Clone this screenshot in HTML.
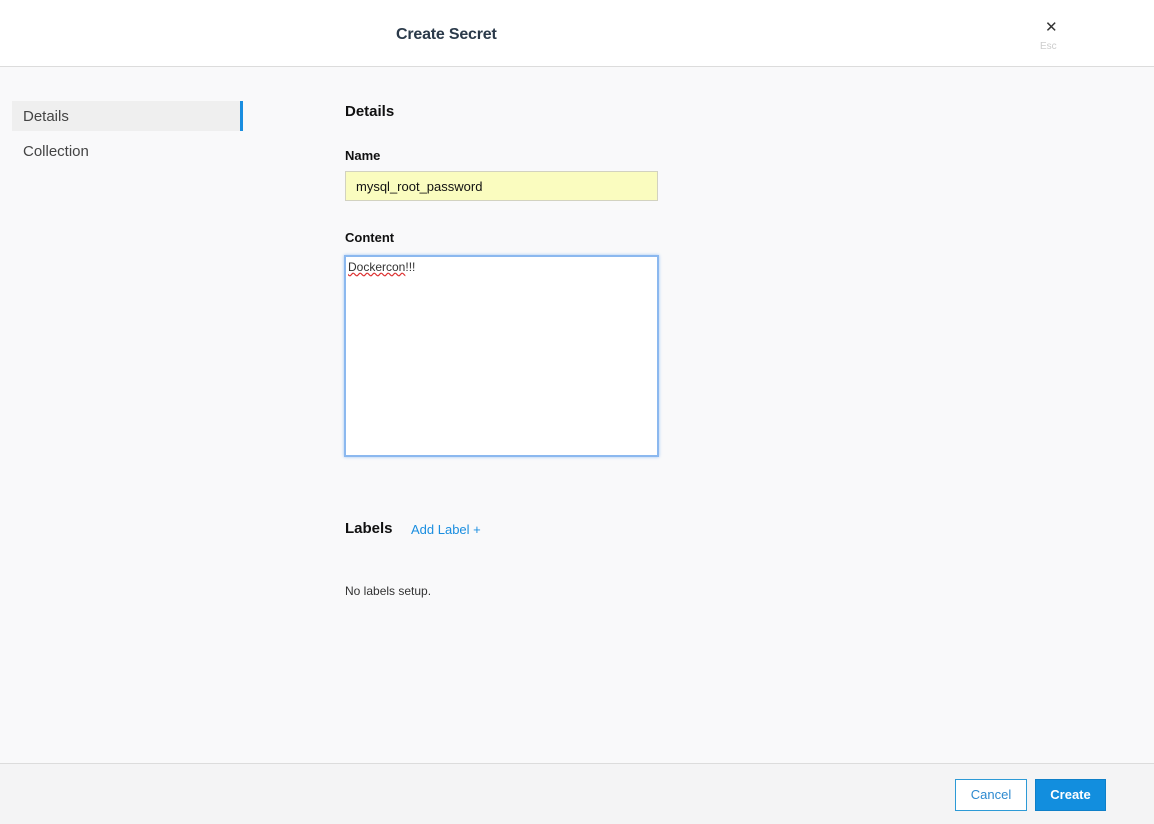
<!DOCTYPE html>
<html><head><style>
body{margin:0;width:1154px;height:823px;background:#f9f9fa;font-family:"Liberation Sans",sans-serif;position:relative;overflow:hidden}
.hdr{position:absolute;left:0;top:0;width:1154px;height:66px;background:#fff;border-bottom:1px solid #dcdcdc}
.title{position:absolute;left:396px;top:26px;font-size:16px;color:#2b3a4a;font-weight:bold;letter-spacing:-0.2px}
.x{position:absolute;left:1045px;top:18px;font-size:15px;color:#333}
.esc{position:absolute;left:1040px;top:41px;font-size:10px;color:#ccc}
.nav1{position:absolute;left:12px;top:101px;width:228px;height:30px;background:#efefef;border-right:3px solid #1a8ee0}
.nav1 span,.nav2{position:absolute;font-size:15px;color:#444}
.nav1 span{left:11px;top:7px}
.nav2{left:23px;top:143px}
.h{position:absolute;font-weight:bold;color:#111}
.in{position:absolute;left:345px;top:171px;width:313px;height:30px;background:#fafcbf;border:1px solid #d2d2c0;font-size:13px;box-sizing:border-box;padding:7px 10px;color:#111}
.ta{position:absolute;left:344px;top:255px;width:315px;height:202px;box-sizing:border-box;border:2px solid #8bb8ef;background:#fff;box-shadow:0 0 3px #9cc4f4;font-size:12px;padding:3px 2px;color:#333}
.ta u{text-decoration:underline wavy #d33}
.add{position:absolute;left:411px;top:522px;font-size:13px;color:#1a8ee0}
.nol{position:absolute;left:345px;top:584px;font-size:12px;color:#333}
.ftr{position:absolute;left:0;top:763px;width:1154px;height:60px;background:#f4f4f5;border-top:1px solid #dcdcdc}
.btn{position:absolute;top:779px;height:32px;box-sizing:border-box;font-size:13px;text-align:center;line-height:30px}
</style></head><body>
<div class="hdr"></div>
<div class="title">Create Secret</div>
<div class="x">✕</div>
<div class="esc">Esc</div>
<div class="nav1"><span>Details</span></div>
<div class="nav2">Collection</div>
<div class="h" style="left:345px;top:103px;font-size:15px">Details</div>
<div class="h" style="left:345px;top:148px;font-size:13px">Name</div>
<div class="in">mysql_root_password</div>
<div class="h" style="left:345px;top:230px;font-size:13px">Content</div>
<div class="ta"><u>Dockercon</u>!!!</div>
<div class="h" style="left:345px;top:520px;font-size:15px">Labels</div>
<div class="add">Add Label +</div>
<div class="nol">No labels setup.</div>
<div class="ftr"></div>
<div class="btn" style="left:955px;width:72px;border:1px solid #2d9ad6;background:#fff;color:#2d8ad0">Cancel</div>
<div class="btn" style="left:1035px;width:71px;background:#128ede;color:#fff;font-weight:bold;border:1px solid #0e7fc8">Create</div>
</body></html>
